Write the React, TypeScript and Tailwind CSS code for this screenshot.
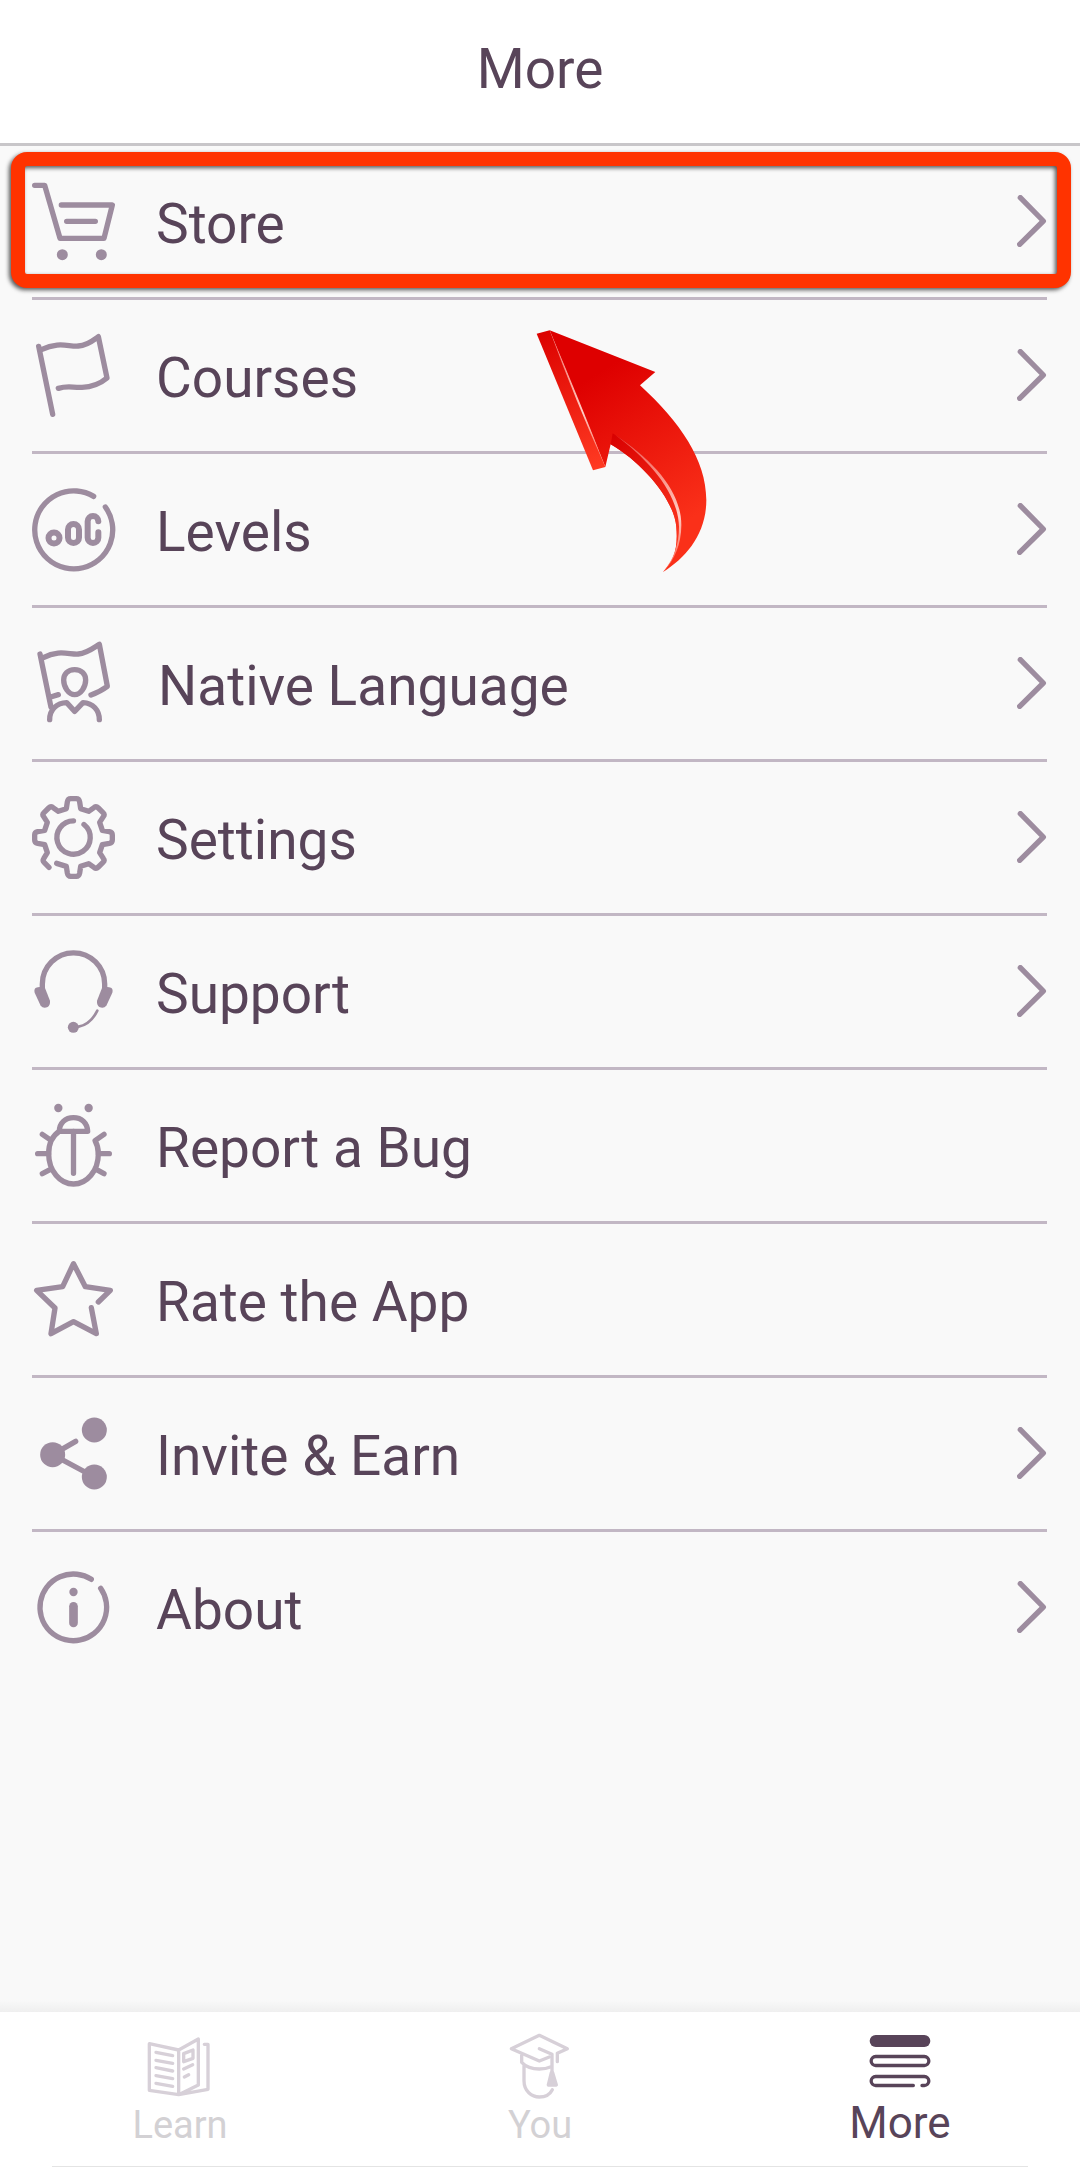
import React from "react";
import clsx from "clsx";

type IconProps = {
  children: React.ReactNode;
};

type MenuItem = {
  label: string;
  icon: React.ReactNode;
  hasChevron: boolean;
};

function MenuIcon({ children }: IconProps) {
  return (
    <svg
      className="size-[83px] shrink-0 overflow-visible"
      viewBox="0 0 249 249"
      fill="none"
      stroke="#9d8c9f"
      strokeWidth={16}
      strokeLinecap="round"
      strokeLinejoin="round"
    >
      {children}
    </svg>
  );
}

function TabIcon({ children }: IconProps) {
  return (
    <svg
      className="size-[72px] shrink-0"
      viewBox="0 0 216 216"
      fill="none"
      stroke="currentColor"
      strokeWidth={10}
      strokeLinecap="round"
      strokeLinejoin="round"
    >
      {children}
    </svg>
  );
}

const menuItems: MenuItem[] = [
  {
    label: "Store",
    hasChevron: true,
    icon: (
      <MenuIcon>
        <path d="M8 16H38L84 175H216L241 75H88M104 124H190" />
        <circle cx="91" cy="224" r="16.5" fill="#9d8c9f" stroke="none" />
        <circle cx="208" cy="224" r="16.5" fill="#9d8c9f" stroke="none" />
      </MenuIcon>
    ),
  },
  {
    label: "Courses",
    hasChevron: true,
    icon: (
      <MenuIcon>
        <path d="M20 37L62 241" />
        <path d="M28 47C80 22 108 38 139 36S185 17 199 8L225 132C206 148 180 159 150 160S108 154 79 163" />
      </MenuIcon>
    ),
  },
  {
    label: "Levels",
    hasChevron: true,
    icon: (
      <MenuIcon>
        <path d="M185 25A117 117 0 1 0 220 57" />
        <g strokeWidth={18}>
          <circle cx="66" cy="150" r="16.5" />
          <rect x="108" y="108" width="33" height="57" rx="16.5" />
          <path d="M199 100a16 16 0 0 0-32 0v49a16 16 0 0 0 32 0v-16" />
        </g>
      </MenuIcon>
    ),
  },
  {
    label: "Native Language",
    hasChevron: true,
    icon: (
      <MenuIcon>
        <path d="M24 36L57 196M34 47C80 22 112 38 139 36S185 17 202 7L226 133Q206 148 177 159M56 165L79 158" />
        <path d="M128 83C149 83 161 97 161 114C161 135 146 158 128 158S95 135 95 114C95 97 107 83 128 83Z" />
        <path d="M53 233C53 202 75 183 104 182L128 208L153 182C183 183 202 205 202 233" />
      </MenuIcon>
    ),
  },
  {
    label: "Settings",
    hasChevron: true,
    icon: (
      <MenuIcon>
        <path d="M51 214L37 200Q31 194 35 188L46 170L38 146L17 142Q8 140 8 132V117Q8 109 17 107L38 103L46 79L35 62Q30 56 36 50L50 36Q56 30 62 34L79 46L103 38L106 18Q108 8 116 8H133Q141 8 143 18L146 38L170 46L187 34Q193 30 199 36L213 50Q219 56 214 62L203 79L211 103L232 107Q241 109 241 117V132Q241 140 232 142L211 146L203 170L214 187Q219 193 213 199L199 213Q193 219 187 215L170 203L146 211L143 231Q141 241 133 241H116Q108 241 106 231L103 211L74 202" />
        <path d="M124.500 74.500A50 50 0 1 0 156 85.500" />
      </MenuIcon>
    ),
  },
  {
    label: "Support",
    hasChevron: true,
    icon: (
      <MenuIcon>
        <path d="M31 120V102A93.500 93.500 0 0 1 218 102V120" />
        <g fill="#9d8c9f" stroke="none">
          <path d="M12 113Q24 108 39 114L54 152Q55 165 47 171Q34 177 26 167L8 128Q5 117 12 113Z" />
          <path d="M237 113Q225 108 210 114L195 152Q194 165 202 171Q215 177 223 167L241 128Q244 117 237 113Z" />
          <circle cx="124" cy="232" r="16.500" />
        </g>
        <path d="M196 182Q176 223 140 230" strokeWidth={8} />
      </MenuIcon>
    ),
  },
  {
    label: "Report a Bug",
    hasChevron: false,
    icon: (
      <MenuIcon>
        <circle cx="79" cy="12" r="12.500" fill="#9d8c9f" stroke="none" />
        <circle cx="170" cy="12" r="12.500" fill="#9d8c9f" stroke="none" />
        <path d="M84 82H167C166 57 149 41 124.500 41S82 57 82 82" />
        <path d="M216 91L189 110C196 122 199 134 199 149C199 200 165 240 124.500 240S50 200 50 149C50 120 61 96 82 82" />
        <path d="M124.500 82V208M31 91L54 107M17 149H50M199 149H232M31 209L54 197M216 209L194 197" />
      </MenuIcon>
    ),
  },
  {
    label: "Rate the App",
    hasChevron: false,
    icon: (
      <MenuIcon>
        <path d="M178 149L193 227L124.500 191L57 227L69 150L14 97L92 86L124.500 17L160 86L235 97L199 132" />
      </MenuIcon>
    ),
  },
  {
    label: "Invite & Earn",
    hasChevron: true,
    icon: (
      <MenuIcon>
        <path d="M131 88L62 128L187 195" />
        <g fill="#9d8c9f" stroke="none">
          <circle cx="62" cy="128" r="37.500" />
          <circle cx="187" cy="54" r="37.500" />
          <circle cx="187" cy="195" r="37.500" />
        </g>
      </MenuIcon>
    ),
  },
  {
    label: "About",
    hasChevron: true,
    icon: (
      <MenuIcon>
        <path d="M178 40A100 100 0 1 0 206 67" />
        <circle cx="124.500" cy="78" r="12.500" fill="#9d8c9f" stroke="none" />
        <path d="M124.500 121V171" strokeWidth={26} />
      </MenuIcon>
    ),
  },
];

const tabs = [
  {
    label: "Learn",
    active: false,
    icon: (
      <TabIcon>
        <path d="M16 41L104 60L163 27V165L104 194L16 181ZM104 60V194L192 178V43H181" />
        <path d="M36 67L86 77M36 91L86 100M36 113L86 123M36 137L86 146M36 160L86 169" />
        <path d="M119 71L147 60V85L119 95ZM119 117L146 104M121 141L134 134" />
      </TabIcon>
    ),
  },
  {
    label: "You",
    active: false,
    icon: (
      <TabIcon>
        <path d="M136 81L106 93L22 56L106 16L190 56L160 70V95" />
        <path d="M53 76V97Q72 117 106 117Q126 117 139 111M60 106V152C60 183 83 201 106 201C125 201 138 193 145 179" />
        <path d="M106 56L144 73V125" />
        <path d="M142 128H146L157 165H133Z" fill="currentColor" />
      </TabIcon>
    ),
  },
  {
    label: "More",
    active: true,
    icon: (
      <TabIcon>
        <rect x="17" y="15" width="182" height="36" rx="18" fill="currentColor" stroke="none" />
        <rect x="21.500" y="79.500" width="173" height="27" rx="13.500" />
        <path d="M148 166.500H35A13.500 13.500 0 0 1 35 139.500H181A13.500 13.500 0 0 1 181 166.500H174" />
      </TabIcon>
    ),
  },
];

function Chevron() {
  return (
    <svg className="mb-[2px] ml-auto h-[52px] w-[30px]" viewBox="0 0 90 156" fill="none">
      <path
        d="M10 8L79 78L8 148"
        stroke="#9d8c9f"
        strokeWidth={16}
        strokeLinecap="round"
        strokeLinejoin="round"
      />
    </svg>
  );
}

function PointerArrow() {
  return (
    <svg
      className="pointer-events-none absolute left-[500px] top-[300px] h-[290px] w-[260px]"
      viewBox="0 0 780 870"
    >
      <defs>
        <linearGradient id="face" gradientUnits="userSpaceOnUse" x1="240" y1="180" x2="560" y2="700">
          <stop offset="0.1" stopColor="#de0000" />
          <stop offset="0.95" stopColor="#fa3019" />
        </linearGradient>
        <linearGradient id="side" gradientUnits="userSpaceOnUse" x1="130" y1="100" x2="300" y2="500">
          <stop offset="0" stopColor="#dc0200" />
          <stop offset="1" stopColor="#ff3a22" />
        </linearGradient>
        <linearGradient id="edge" gradientUnits="userSpaceOnUse" x1="335" y1="400" x2="535" y2="740">
          <stop offset="0" stopColor="#d80000" />
          <stop offset="1" stopColor="#ff3a22" />
        </linearGradient>
        <linearGradient id="shine" x1="0" y1="0" x2="0" y2="1">
          <stop offset="0" stopColor="#ffb3a8" stopOpacity="0.4" />
          <stop offset="0.6" stopColor="#ffd0c8" />
          <stop offset="1" stopColor="#ff8a78" stopOpacity="0.5" />
        </linearGradient>
      </defs>
      <path
        d="M149 91L466 216L420 256C540 366 619 480 619 600C619 700 560 772 489 816C520 782 535 750 529 680C522 600 430 490 332 433L316 501Z"
        fill="url(#face)"
      />
      <path d="M110 101L149 91L316 501L279 511Z" fill="url(#side)" />
      <path
        d="M332 433L338 400C450 470 540 570 541 680C541 740 520 785 489 816C520 782 535 750 529 680C522 600 430 490 332 433Z"
        fill="url(#edge)"
      />
      <path d="M149 91Q242 310 316 501Q226 302 149 91Z" fill="url(#shine)" />
      <path
        d="M345 404C462 482 544 575 544 675C544 735 522 780 494 811C522 770 537 735 537 680C534 580 452 484 345 404Z"
        fill="url(#shine)"
      />
    </svg>
  );
}

export default function App() {
  return (
    <div className="relative flex h-[2176px] w-[1080px] flex-col overflow-hidden bg-[#f9f9f9] font-['Roboto',sans-serif] text-[#584459]">
      <header className="flex h-[146px] shrink-0 items-center justify-center border-b-[3px] border-[#c8c6c9] bg-white pb-[5px]">
        <h1 className="text-[55px] leading-[64px]">More</h1>
      </header>

      <main className="relative flex-1">
        <ul className="ml-8 mr-[33px]">
          {menuItems.map((item) => (
            <li
              key={item.label}
              className="flex h-[154px] items-center border-b-[3px] border-[#c2b7c4] last:border-transparent"
            >
              {item.icon}
              <span
                className={clsx(
                  "pt-[5px] text-[55px] leading-[64px]",
                  item.label === "Native Language" ? "ml-[43px]" : "ml-[41px]"
                )}
              >
                {item.label}
              </span>
              {item.hasChevron && <Chevron />}
            </li>
          ))}
        </ul>
        <div className="pointer-events-none absolute left-[11px] top-[6px] h-[136px] w-[1060px] rounded-[16px] border-[14px] border-[#ff3300] drop-shadow-[-2px_2px_2px_rgba(0,0,0,0.65)]" />
      </main>

      <div className="h-3 shrink-0 bg-linear-to-b from-[#f9f9f9] to-[#efefef]" />
      <nav className="h-[164px] shrink-0 bg-white">
        <div className="grid h-[154px] grid-cols-3">
          {tabs.map((tab) => (
            <div
              key={tab.label}
              className={clsx(
                "flex flex-col items-center pt-[18px]",
                tab.active ? "text-[#584459]" : "text-[#d7d0d8]"
              )}
            >
              {tab.icon}
              <span
                className={clsx(
                  tab.active
                    ? "-mt-px text-[44px] leading-[44px]"
                    : "mt-px text-[38px] leading-[44px] text-[#d3d1d4]"
                )}
              >
                {tab.label}
              </span>
            </div>
          ))}
        </div>
        <div className="mx-[52px] h-px bg-[#e4e4e4]" />
      </nav>

      <PointerArrow />
    </div>
  );
}
